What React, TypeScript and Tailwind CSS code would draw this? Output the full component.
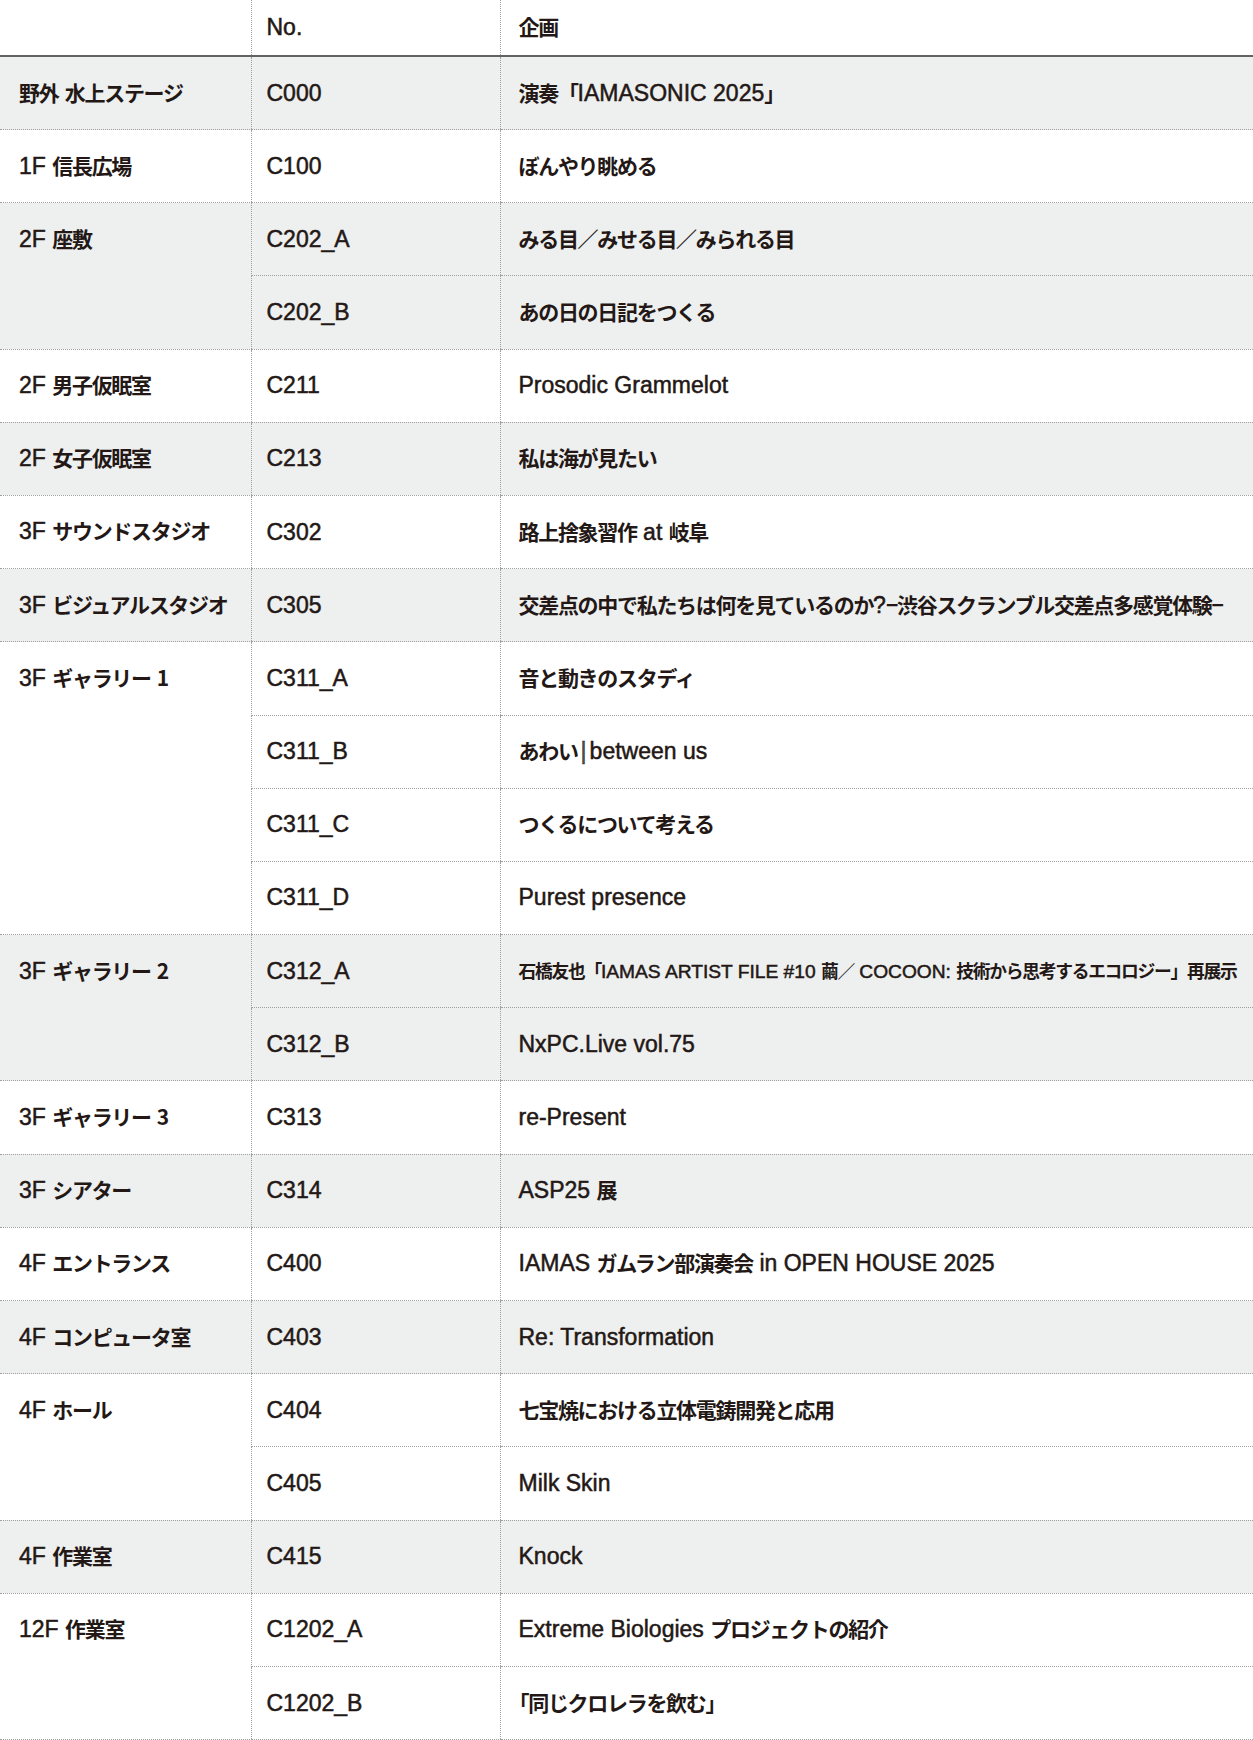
import { Fragment } from 'react'

// ── Data ───────────────────────────────────────────────

type Item = { no: string; title: string; small?: boolean }
type Group = { place: string; items: Item[] }

const GROUPS: Group[] = [
  { place: '野外 水上ステージ', items: [{ no: 'C000', title: '演奏「IAMASONIC 2025」' }] },
  { place: '1F 信長広場', items: [{ no: 'C100', title: 'ぼんやり眺める' }] },
  {
    place: '2F 座敷',
    items: [
      { no: 'C202_A', title: 'みる目／みせる目／みられる目' },
      { no: 'C202_B', title: 'あの日の日記をつくる' },
    ],
  },
  { place: '2F 男子仮眠室', items: [{ no: 'C211', title: 'Prosodic Grammelot' }] },
  { place: '2F 女子仮眠室', items: [{ no: 'C213', title: '私は海が見たい' }] },
  { place: '3F サウンドスタジオ', items: [{ no: 'C302', title: '路上捨象習作 at 岐阜' }] },
  {
    place: '3F ビジュアルスタジオ',
    items: [{ no: 'C305', title: '交差点の中で私たちは何を見ているのか?−渋谷スクランブル交差点多感覚体験−' }],
  },
  {
    place: '3F ギャラリー 1',
    items: [
      { no: 'C311_A', title: '音と動きのスタディ' },
      { no: 'C311_B', title: 'あわい|between us' },
      { no: 'C311_C', title: 'つくるについて考える' },
      { no: 'C311_D', title: 'Purest presence' },
    ],
  },
  {
    place: '3F ギャラリー 2',
    items: [
      {
        no: 'C312_A',
        title: '石橋友也「IAMAS ARTIST FILE #10 繭／ COCOON: 技術から思考するエコロジー」再展示',
        small: true,
      },
      { no: 'C312_B', title: 'NxPC.Live vol.75' },
    ],
  },
  { place: '3F ギャラリー 3', items: [{ no: 'C313', title: 're-Present' }] },
  { place: '3F シアター', items: [{ no: 'C314', title: 'ASP25 展' }] },
  { place: '4F エントランス', items: [{ no: 'C400', title: 'IAMAS ガムラン部演奏会 in OPEN HOUSE 2025' }] },
  { place: '4F コンピュータ室', items: [{ no: 'C403', title: 'Re: Transformation' }] },
  {
    place: '4F ホール',
    items: [
      { no: 'C404', title: '七宝焼における立体電鋳開発と応用' },
      { no: 'C405', title: 'Milk Skin' },
    ],
  },
  { place: '4F 作業室', items: [{ no: 'C415', title: 'Knock' }] },
  {
    place: '12F 作業室',
    items: [
      { no: 'C1202_A', title: 'Extreme Biologies プロジェクトの紹介' },
      { no: 'C1202_B', title: '「同じクロレラを飲む」' },
    ],
  },
]

// Japanese runs are set bold in the CJK face, latin stays regular.
// A lone digit after a kana run ("ギャラリー 1") goes with the Japanese.
const CJK_RUN = /([\u2212\u3000-\u30ff\u4e00-\u9fff\uff00-\uffef]+(?: \d(?!\d))?)/
const CJK_TEST = /[\u2212\u3000-\u30ff\u4e00-\u9fff\uff00-\uffef]/

function Latin({ text }: { text: string }) {
  // the divider in "あわい|between us" gets a little air on both sides
  const bits = text.split('|')
  return (
    <span className="[-webkit-text-stroke:0.5px_#231815]">
      {bits.map((b, i) => (
        <Fragment key={i}>
          {i > 0 && <span className="mx-[3px] font-light text-[#555]">|</span>}
          {b}
        </Fragment>
      ))}
    </span>
  )
}

function Mixed({ text, small }: { text: string; small?: boolean }) {
  const parts = text.split(CJK_RUN).filter(Boolean)
  const cjkClass = small
    ? "font-['Noto_Sans_CJK_JP',sans-serif] text-[17.8px] font-bold tracking-[-1.3px]"
    : "font-['Noto_Sans_CJK_JP',sans-serif] text-[21px] font-bold tracking-[-1.3px]"

  return (
    <span className={small ? 'text-[19.2px]' : 'text-[23px]'}>
      {parts.map((p, i) => {
        if (!CJK_TEST.test(p)) return <Latin key={i} text={p} />

        const digit = p.match(/ (\d)$/)
        const body = digit ? p.slice(0, -2) : p
        // opening bracket at the very start sits flush with the column edge
        const leadBracket = i === 0 && body.startsWith('「')
        return (
          <span key={i} className={cjkClass}>
            {leadBracket ? (
              <>
                <span className="-ml-[10px]">「</span>
                {body.slice(1)}
              </>
            ) : (
              body
            )}
            {digit && <span className="ml-[6px] tracking-normal">{digit[1]}</span>}
          </span>
        )
      })}
    </span>
  )
}

// ── Main Page ──────────────────────────────────────────

export default function App() {
  return (
    <div className="w-[1253px] bg-white font-['Liberation_Sans','Noto_Sans_CJK_JP',sans-serif] leading-none text-[#231815]">
      <table className="w-full table-fixed border-collapse">
        <colgroup>
          <col className="w-[251px]" />
          <col className="w-[249px]" />
          <col />
        </colgroup>
        <thead>
          <tr className="h-[56px] border-b-2 border-solid border-[#626262]">
            <th className="p-0" />
            <th className="border-l border-dotted border-l-[#a0a0a0] pl-[15px] text-left font-normal">
              <Mixed text="No." />
            </th>
            <th className="border-l border-dotted border-l-[#a0a0a0] pl-[18px] text-left font-normal">
              <Mixed text="企画" />
            </th>
          </tr>
        </thead>
        <tbody>
          {GROUPS.map((g, gi) => {
            const bg = gi % 2 === 0 ? 'bg-[#eeefef]' : 'bg-white'
            return g.items.map((item, ii) => (
              <tr key={item.no} className={`h-[73.2px] ${bg}`}>
                {ii === 0 && (
                  <td
                    rowSpan={g.items.length}
                    className="border-b border-dotted border-b-[#a0a0a0] p-0 pl-[19px] align-top"
                  >
                    <div className="flex h-[72px] items-center">
                      <Mixed text={g.place} />
                    </div>
                  </td>
                )}
                <td className="border-b border-l border-dotted border-[#a0a0a0] p-0 pl-[15px]">
                  <Mixed text={item.no} />
                </td>
                <td className="border-b border-l border-dotted border-[#a0a0a0] p-0 pl-[18px] whitespace-nowrap">
                  <Mixed text={item.title} small={item.small} />
                </td>
              </tr>
            ))
          })}
        </tbody>
      </table>
    </div>
  )
}
